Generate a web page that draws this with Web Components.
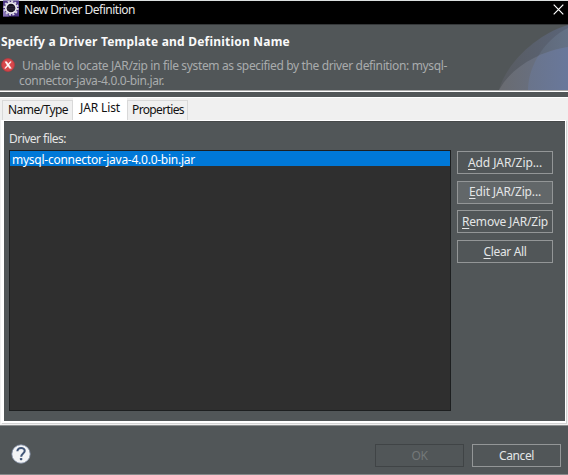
<!DOCTYPE html>
<html lang="en"><head><meta charset="utf-8"><title>New Driver Definition</title>
<style>
html,body{margin:0;padding:0}
body{width:568px;height:475px;overflow:hidden;background:#515658;font:12px/16px "Noto Sans","Open Sans",sans-serif;color:#e6e6e6}
</style></head><body>
<driver-dialog></driver-dialog>
<script>
const define=(name,html,init)=>customElements.define(name,class extends HTMLElement{
  constructor(){super();this.attachShadow({mode:'open'}).innerHTML=html;}
  connectedCallback(){if(init)init(this);}
});
// Text whose letter spacing is adjusted so that its longest line fills a given width;
// "n" is the character count of that line when there is more than one.
define('fit-text','<style>:host{display:block;white-space:nowrap;flex:none}span{display:inline-block;vertical-align:top}</style><span><slot></slot></span>',el=>{
  const w=+el.getAttribute('w'),s=el.shadowRoot.querySelector('span'),n=+el.getAttribute('n')||el.textContent.length;
  el.style.width=w+'px';
  s.style.letterSpacing=((w-s.getBoundingClientRect().width)/n)+'px';
});
define('app-icon',`<style>:host{display:block;width:17px;height:17px}svg{display:block}</style>
<svg width="17" height="17" viewBox="0 0 17 17"><rect width="16" height="16" y=".5" fill="#4b3585"/><path d="M0 16.5V9l6 7.5z" fill="#8673b6"/><circle cx="8" cy="8" r="6.7" fill="none" stroke="#d8d5df" stroke-width="2" stroke-dasharray="2.1 1.4"/><circle cx="8" cy="8" r="5.2" fill="#17131f" stroke="#eeecf2" stroke-width="1.7"/><path d="M4 6.6h8M3.8 8.3h8.4M4 10h8" stroke="#302943" stroke-width=".8"/></svg>`);
define('close-icon',`<style>:host{display:block;width:11px;height:11px}svg{display:block}</style><svg width="11" height="11"><path d="M.7.7l9.6 9.6M10.3.7L.7 10.3" stroke="#fff" stroke-width="1.2"/></svg>`);
define('error-icon',`<style>:host{display:block;width:14px;height:14px}svg{display:block}</style><svg width="14" height="14"><circle cx="7" cy="7" r="6.4" fill="#d8474b" stroke="#b9373d" stroke-width=".8"/><path d="M4.1 3.8h1.7l1.4 2.1 1.9-2.1h1.1L7.9 6.8l2.4 3.5H8.5L6.9 8.1l-2 2.2H3.7L6.2 7.2z" fill="#fff" stroke="#fff" stroke-width=".5"/></svg>`);
define('help-icon',`<style>:host{display:block;width:20px;height:20px}svg{display:block}</style><svg width="20" height="20"><circle cx="10" cy="10" r="9.2" fill="#f3f4f6" stroke="#8492aa" stroke-width=".8"/><path d="M6.4 7.2c0-4.4 7.5-4.1 7.3-.2-.1 2.5-3.5 2.5-3.5 5.7" fill="none" stroke="#425779" stroke-width="2.1"/><rect x="8.9" y="14" width="2.4" height="2.2" rx=".6" fill="#425779"/></svg>`);
define('title-bar',`<style>:host{display:flex;box-sizing:border-box;height:25px;background:#000;border-top:1px solid #dce0e0;border-bottom:1px solid #35383a;padding:0 4px 0 3px;color:#e8e8e8}fit-text{margin:1px auto 0 4px}close-icon{margin-top:2.5px}app-icon{margin-top:-1px}</style><app-icon></app-icon><fit-text w="111">New Driver Definition</fit-text><close-icon></close-icon>`);
define('header-banner',`<style>:host{display:flex;height:65px;background:#515658;overflow:hidden}
.copy{width:498px;padding-top:9px;box-sizing:border-box}.title{font-weight:700;color:#fafafa;margin-left:1px}.row{display:flex;align-items:flex-start;margin-top:8px;color:#a9acad;line-height:15px}.row error-icon{margin:0 1px 0 1px}.row fit-text{text-indent:3px}svg{display:block}</style>
<div class="copy"><fit-text class="title" w="289">Specify a Driver Template and Definition Name</fit-text><div class="row"><error-icon></error-icon><fit-text w="428" n="85">Unable to locate JAR/zip in file system as specified by the driver definition: mysql-<br>connector-java-4.0.0-bin.jar.</fit-text></div></div>
<svg width="70" height="65"><defs><linearGradient id="a"><stop stop-color="#585b60"/><stop offset="1" stop-color="#5a6478"/></linearGradient><linearGradient id="b"><stop stop-color="#696b70"/><stop offset="1" stop-color="#67738d"/></linearGradient><linearGradient id="c"><stop stop-color="#5e6674"/><stop offset="1" stop-color="#647186"/></linearGradient><linearGradient id="d"><stop stop-color="#6a717f"/><stop offset="1" stop-color="#69789b"/></linearGradient><clipPath id="k"><path d="M30 65C30 41 47 14 70 3V65z"/></clipPath></defs><path d="M1 65C7 41 36 10 70 0V65z" fill="url(#a)"/><path d="M30 65C30 41 47 14 70 3V65z" fill="url(#c)"/><path d="M1 65C13 43 39 27 70 22V65z" fill="url(#b)"/><g clip-path="url(#k)"><path d="M1 65C13 43 39 27 70 22V65z" fill="url(#d)"/></g></svg>`);
define('tab-item',`<style>:host{display:block;box-sizing:border-box;height:20px;background:#f0f0f0;border:1px solid #d9d9d9;border-bottom:0;padding:1px 0 0 5px;color:#111}:host([active]){height:22px;background:#fff;border-color:#fff}</style><slot></slot>`);
define('push-button',`<style>:host{display:flex;box-sizing:border-box;height:23px;border:1px solid #939697;align-items:center;justify-content:center;color:#e4e6e7}:host([hover]){background:#626769}:host([disabled]){border-color:#404446;color:#747879}</style><slot></slot>`);
define('file-list',`<style>:host{display:block;box-sizing:border-box;width:442px;height:261px;background:#2f2f2f;border:1px solid #1d1f20}.sel{height:15px;background:#0078d7;color:#fff;padding-left:2px;line-height:17px}</style><div class="sel"><fit-text w="183">mysql-connector-java-4.0.0-bin.jar</fit-text></div>`);
define('tab-folder',`<style>:host{display:block;box-sizing:border-box;height:328px;background:#f0f0f0;border-top:1px solid #fff}
.tabs{height:22px;display:flex;align-items:flex-end;padding-left:2px}
.panel{box-sizing:border-box;margin:0 2px 0 1px;border:solid #fff;border-width:1px 1px 2px 3px;height:303px;background:#515658;box-shadow:1px 1px 0 #d2d2d2,inset 0 1px 0 #46494a;padding:9px 0 0 5px;display:flex}
.left{width:442px}.left>fit-text{height:20px;line-height:18px}.buttons{width:96px;margin:21px 0 0 6px;display:grid;grid-auto-rows:23px;row-gap:6.7px;align-content:start}
u{text-decoration:underline;text-underline-offset:2px;text-decoration-thickness:1px;text-decoration-skip-ink:none}</style>
<div class="tabs"><tab-item style="width:71px"><fit-text w="60">Name/Type</fit-text></tab-item><tab-item active style="width:54px;padding-left:6px"><fit-text w="40">JAR List</fit-text></tab-item><tab-item style="width:61px;padding-left:4px"><fit-text w="52">Properties</fit-text></tab-item></div>
<div class="panel"><div class="left"><fit-text w="57">Driver files:</fit-text><file-list></file-list></div><div class="buttons"><push-button><fit-text w="74"><u>A</u>dd JAR/Zip...</fit-text></push-button><push-button hover><fit-text w="72"><u>E</u>dit JAR/Zip...</fit-text></push-button><push-button><fit-text w="86"><u>R</u>emove JAR/Zip</fit-text></push-button><push-button><fit-text w="43"><u>C</u>lear All</fit-text></push-button></div></div>`);
define('dialog-footer',`<style>:host{display:flex;box-sizing:border-box;height:50px;border-top:1px solid #8c8f90;border-bottom:1px solid #858889;padding:18px 7px 0 11px;background:#515658}push-button{width:89px}push-button+push-button{margin-left:8px}help-icon{margin:0 auto 0 -.5px}</style><help-icon></help-icon><push-button disabled><fit-text w="16">OK</fit-text></push-button><push-button><fit-text w="35">Cancel</fit-text></push-button>`);
define('driver-dialog',`<style>:host{display:block;width:568px;height:475px}.rule{box-sizing:border-box;height:7px;border-top:1px solid #aaa;background:linear-gradient(#fff 0 1px,#515658 1px);}</style><title-bar></title-bar><header-banner></header-banner><div class="rule"></div><tab-folder></tab-folder><dialog-footer></dialog-footer>`);
</script></body></html>
